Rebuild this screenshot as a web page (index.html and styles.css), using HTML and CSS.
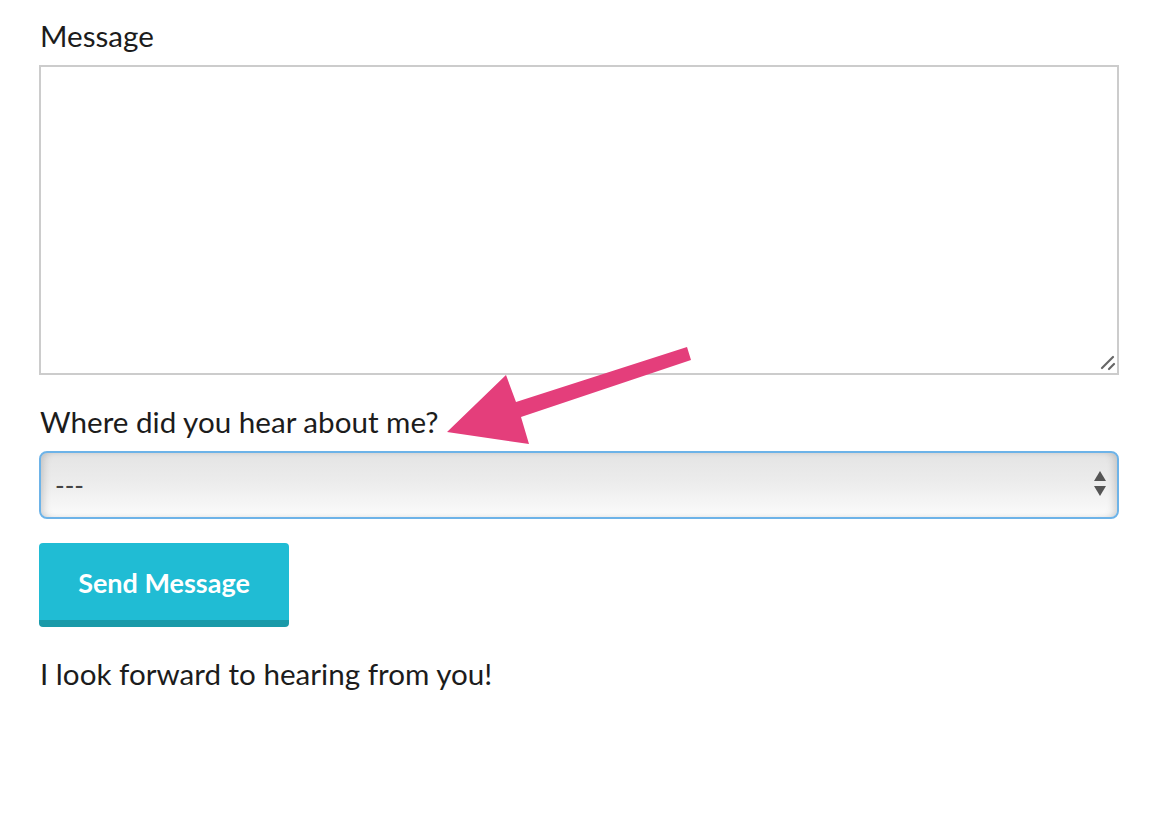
FILE: index.html
```html
<!DOCTYPE html>
<html>
<head>
<meta charset="utf-8">
<link rel="stylesheet" href="styles.css">
</head>
<body>
<form class="contact">
  <label class="field-label" for="msg">Message</label>
  <div class="textarea-wrap">
    <textarea id="msg" class="message-box"></textarea>
    <svg class="grip" width="16" height="16" viewBox="0 0 16 16">
      <line x1="2" y1="13" x2="13" y2="2" stroke="#666" stroke-width="2.2" stroke-linecap="round"/>
      <line x1="9" y1="14" x2="14" y2="9" stroke="#666" stroke-width="2.2" stroke-linecap="round"/>
    </svg>
  </div>
  <label class="field-label field-label--spaced" for="src">Where did you hear about me?</label>
  <div class="select-wrap">
    <select id="src" class="source-select">
      <option>---</option>
    </select>
    <svg class="select-arrows" width="14" height="28" viewBox="0 0 14 28">
      <polygon points="7,1 13,11 1,11" fill="#555"/>
      <polygon points="1,16 13,16 7,26" fill="#555"/>
    </svg>
  </div>
  <button type="button" class="send-btn">Send Message</button>
  <p class="closing">I look forward to hearing from you!</p>
  <svg class="pointer-arrow" width="1170" height="828" viewBox="0 0 1170 828">
    <polygon points="687,347 691,360 521,417 529,444 447,432 506,375 516,402" fill="#e43e7b"/>
  </svg>
</form>
</body>
</html>
```

FILE: styles.css
```css
html, body {
  margin: 0;
  padding: 0;
  background: #ffffff;
}

body {
  font-family: Lato, "Open Sans", "Liberation Sans", sans-serif;
  color: #1c1c1c;
}

.contact {
  position: relative;
  padding: 16px 51px 40px 39px;
  display: flex;
  flex-direction: column;
  align-items: stretch;
}

.field-label {
  display: block;
  font-size: 29.6px;
  line-height: 40px;
  margin: 0 0 9px 1px;
}

.field-label--spaced {
  margin-top: 27px;
}

.textarea-wrap {
  position: relative;
  height: 310px;
}

.message-box {
  display: block;
  box-sizing: border-box;
  width: 100%;
  height: 310px;
  border: 2px solid #cccccc;
  border-radius: 0;
  margin: 0;
  padding: 8px;
  font-family: inherit;
  font-size: 20px;
  background: #fff;
  resize: none;
  outline: none;
}

.grip {
  position: absolute;
  right: 3px;
  bottom: 4px;
  pointer-events: none;
}

.select-wrap {
  position: relative;
  height: 68px;
}

.source-select {
  -webkit-appearance: none;
  appearance: none;
  box-sizing: border-box;
  width: 100%;
  height: 68px;
  border: 2px solid #6db3e8;
  border-radius: 8px;
  padding: 0 14px;
  font-family: inherit;
  font-size: 26px;
  color: #444;
  background: linear-gradient(to bottom, #e4e4e4 0%, #ececec 45%, #fbfbfb 100%);
  box-shadow: inset 6px 0 8px -4px rgba(0,0,0,0.18), inset -6px 0 8px -4px rgba(0,0,0,0.18);
  outline: none;
}

.select-arrows {
  position: absolute;
  right: 12px;
  top: 19px;
  pointer-events: none;
}

.send-btn {
  align-self: flex-start;
  margin-top: 24px;
  width: 250px;
  height: 84px;
  box-sizing: border-box;
  border: none;
  border-bottom: 7px solid #1a9aa9;
  border-radius: 4px;
  background: #20bcd4;
  color: #ffffff;
  font-family: inherit;
  font-weight: 700;
  font-size: 27px;
  padding: 2px 0 0 0;
  cursor: pointer;
}

.closing {
  font-size: 29.6px;
  line-height: 40px;
  margin: 27px 0 0 1px;
}

.pointer-arrow {
  position: absolute;
  left: 0;
  top: 0;
  pointer-events: none;
}
```
